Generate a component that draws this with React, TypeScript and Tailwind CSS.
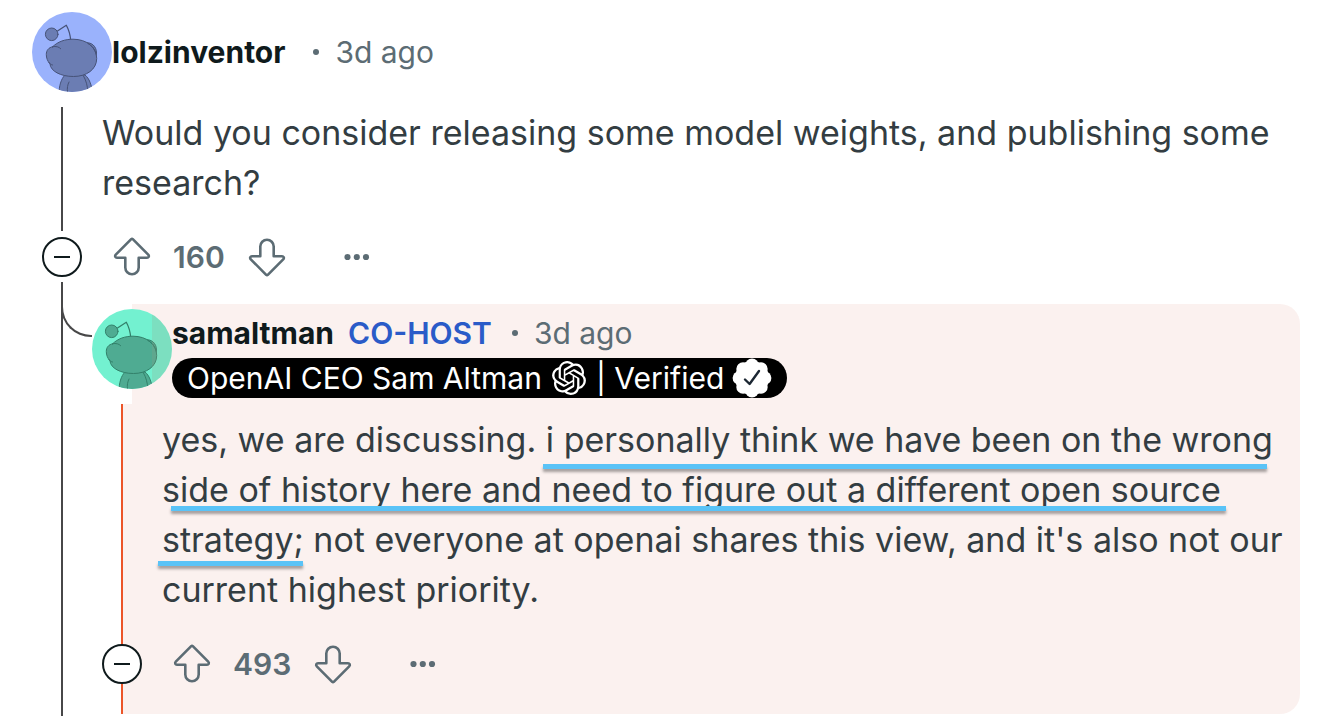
import React from "react";
import { SiOpenai } from "react-icons/si";

type AvatarColors = { bg: string; fill: string; stroke: string };

function Avatar({ colors, tinted }: { colors: AvatarColors; tinted?: boolean }) {
  return (
    <svg viewBox="0 0 80 80" className="block size-20 shrink-0 overflow-hidden rounded-full" aria-hidden="true">
      <rect width="80" height="80" fill={colors.bg} />
      <g fill={colors.fill} stroke={colors.stroke} strokeWidth="1" strokeLinecap="round" strokeLinejoin="round">
        <path d="M27 82C27 74 29 67 33 63H53C57 66 60 73 60.5 82Z" />
        <path d="M35.5 80C35 76 35.5 73 37 70" fill="none" />
        <path d="M51.5 64C54 68 55.5 74 56 80" fill="none" />
        <path d="M53 31C59 29.500 64.500 34 64.500 41L62 47Z" />
        <path d="M25.500 19L34.300 13.300C37 18 38.300 23 38.800 29" fill="none" strokeWidth="1.300" />
        <circle cx="19.700" cy="22.300" r="6.300" />
        <path d="M20.700 34.700C26 29.500 33 27.200 41 27.200C55 27.200 64.700 35.500 64.700 46.500C64.700 57.500 54.500 64.500 41.500 64.500C28.500 64.500 18.500 59 18 52C15.500 49 14.300 46 14.300 42.500C14.300 38.500 16.500 35.500 20.700 34.700Z" />
        <path d="M20.700 34.700C24 34 27 34.800 28.700 36.700" fill="none" />
        <path d="M17 50.500C17.800 51.800 18.800 52.600 20.500 53" fill="none" />
        <path d="M56 31.500C60.500 34 63.500 38 64.300 43" fill="none" />
      </g>
      {tinted && <rect x="60" width="20" height="80" fill="#a09a80" fillOpacity="0.2" />}
    </svg>
  );
}

function VoteArrow({ down }: { down?: boolean }) {
  return (
    <svg viewBox="0 0 40 40" className={down ? "block size-10 rotate-180" : "block size-10"} aria-hidden="true">
      <path
        d="M20.800 2.200L36.200 17.700C37.500 19 36.700 20.700 35 20.700H26.700V30.500A6.700 6.700 0 0 1 13.300 30.500V20.700H5C3.300 20.700 2.500 19 3.800 17.700L19.200 2.200Q20 1.400 20.800 2.200Z"
        fill="none"
        stroke="#5c6c74"
        strokeWidth="2.600"
        strokeLinejoin="round"
      />
    </svg>
  );
}

function VerifiedBadge() {
  const lobes = [0, 45, 90, 135, 180, 225, 270, 315];
  return (
    <svg viewBox="0 0 40 40" className="block size-10" aria-hidden="true">
      <circle cx="20" cy="20" r="17" fill="#fff" />
      {lobes.map((angle) => (
        <circle key={angle} cx="20" cy="7.400" r="6.800" fill="#fff" transform={`rotate(${angle} 20 20)`} />
      ))}
      <path d="M13 21.500L17.600 26L27 13" fill="none" stroke="#1c2733" strokeWidth="2.400" strokeLinecap="round" strokeLinejoin="round" />
    </svg>
  );
}

function Actions({ votes }: { votes: number }) {
  return (
    <div className="flex h-10 items-center pl-5 text-[#5c6c74]">
      <button type="button" aria-label="Upvote">
        <VoteArrow />
      </button>
      <span className="pr-[22px] pl-[21px] text-[30px] leading-10 font-semibold">{votes}</span>
      <button type="button" aria-label="Downvote">
        <VoteArrow down />
      </button>
      <button type="button" aria-label="More options" className="ml-[50px]">
        <svg viewBox="0 0 40 40" className="block size-10" fill="currentColor" aria-hidden="true">
          <circle cx="10.500" cy="20" r="3.100" />
          <circle cx="19.800" cy="20" r="3.100" />
          <circle cx="29" cy="20" r="3.100" />
        </svg>
      </button>
    </div>
  );
}

function CollapseButton() {
  return (
    <button type="button" aria-label="Collapse thread" className="flex size-10 items-center justify-center rounded-full border-2 border-[#0f1a1c] bg-white">
      <span className="h-[2px] w-4 bg-[#0f1a1c]" />
    </button>
  );
}

function Reply() {
  return (
    <article className="flex flex-col rounded-r-[20px] bg-[linear-gradient(to_right,white_30px,#fbf1ef_30px)]">
      <header className="flex">
        <div className="h-[100px] shrink-0 bg-[linear-gradient(to_right,white_40px,transparent_40px)] pt-[5px]">
          <Avatar colors={{ bg: "#73f1d0", fill: "#4fab92", stroke: "#33806a" }} tinted />
        </div>
        <div className="pt-[9px]">
          <div className="flex h-10 items-center text-[30px] leading-10">
            <a href="#samaltman" className="font-bold text-[#0f1a1c]">samaltman</a>
            <span className="ml-[14px] font-semibold text-[#2a5bc8]">CO-HOST</span>
            <span className="mr-4 ml-[20px] size-[6px] rounded-full bg-[#5c6c74]" />
            <time className="text-[#5c6c74]">3d ago</time>
          </div>
          <div className="mt-[5px] flex h-10 w-fit items-center rounded-full bg-black px-[15px] text-[30px] leading-10 whitespace-nowrap text-white">
            <span>OpenAI CEO Sam Altman</span>
            <SiOpenai className="mx-[10px] size-[34px]" aria-hidden="true" />
            <span>| Verified</span>
            <span className="ml-2">
              <VerifiedBadge />
            </span>
          </div>
        </div>
      </header>
      <div className="grid grid-cols-[60px_1fr]">
        <div className="flex justify-center">
          <span className="w-[2px] bg-[#ec5528]" />
        </div>
        <div className="relative ml-[10px] pt-[11px] pb-[29px]">
          <p className="text-[34px] leading-[50px] text-[#333d42]">
            yes, we are discussing. i personally think we have been on the wrong side of history here and need to figure out
            a different open source strategy; not everyone at openai shares this view, and it's also not our current highest
            priority.
          </p>
          <span className="absolute top-[60px] left-[381px] h-[5px] w-[724px] bg-[#5ac3f7] shadow-[0_3px_3px_rgba(0,0,0,0.35)]" />
          <span className="absolute top-[102px] left-[9px] h-[5px] w-[1055px] bg-[#5ac3f7] shadow-[0_3px_3px_rgba(0,0,0,0.35)]" />
          <span className="absolute top-[157px] -left-1 h-[5px] w-[145px] bg-[#5ac3f7] shadow-[0_3px_3px_rgba(0,0,0,0.35)]" />
        </div>
        <div className="flex flex-col items-center">
          <CollapseButton />
          <span className="h-[30px] w-[2px] bg-[#ec5528]" />
        </div>
        <Actions votes={493} />
      </div>
    </article>
  );
}

export default function App() {
  return (
    <main className="flex min-h-screen flex-col bg-white pt-3 pr-[30px] pl-8 font-['Inter',sans-serif]">
      <header className="flex h-20 items-center text-[30px] leading-10">
        <Avatar colors={{ bg: "#9ab2fc", fill: "#6b7db3", stroke: "#475378" }} />
        <a href="#lolzinventor" className="font-bold text-[#0f1a1c]">lolzinventor</a>
        <span className="mr-4 ml-7 size-[6px] rounded-full bg-[#5c6c74]" />
        <time className="text-[#5c6c74]">3d ago</time>
      </header>
      <div className="grid grow grid-cols-[60px_1fr] grid-rows-[auto_auto_1fr]">
        <div className="flex justify-center pt-[15px] pb-[6px]">
          <span className="w-[2px] bg-[#474748]" />
        </div>
        <p className="ml-[10px] pt-4 pb-[29px] text-[34px] leading-[50px] text-[#333d42]">
          Would you consider releasing some model weights, and publishing some research?
        </p>
        <div className="flex justify-center">
          <CollapseButton />
        </div>
        <Actions votes={160} />
        <div className="relative flex justify-center pt-[5px]">
          <span className="w-[2px] bg-[#474748]" />
          <span className="absolute top-7 right-0 h-8 w-[31px] rounded-bl-[30px] border-b-2 border-l-2 border-[#474748]" />
        </div>
        <div className="pt-[27px]">
          <Reply />
        </div>
      </div>
    </main>
  );
}
